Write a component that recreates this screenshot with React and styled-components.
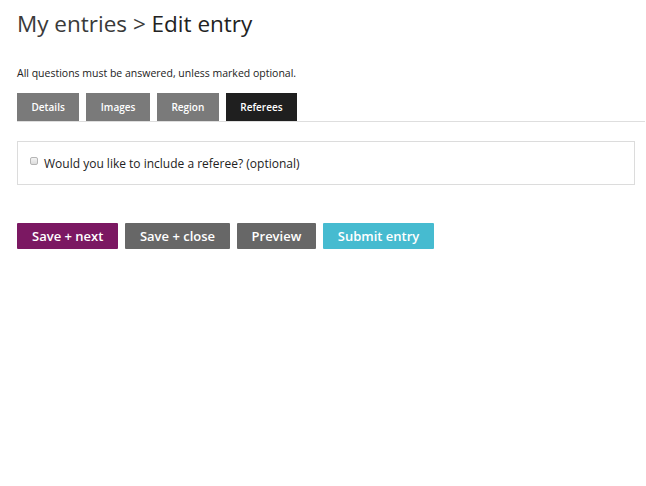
import React from 'react';
import styled, { createGlobalStyle } from 'styled-components';

const Global = createGlobalStyle`
body {
  margin: 0;
  background: #fff;
  font-family: "Open Sans", "Liberation Sans", sans-serif;
  color: #222;
}
`

const Page = styled.div`
padding: 8px 1px 0 17px;
`

const Title = styled.h1`
margin: 0;
font-size: 22.5px;
font-weight: 400;
line-height: 32px;
color: #222;
span {
    color: #3a3a3a;
}
`

const Note = styled.p`
margin: 26px 0 13px;
font-size: 10.5px;
line-height: 14px;
color: #222;
`

const Tabs = styled.div`
display: flex;
gap: 7px;
border-bottom: 1px solid #dedede;
`

const Tab = styled.div`
height: 28px;
padding: 0 14.5px;
display: flex;
align-items: center;
background: ${p => (p.active ? '#1f1f1f' : '#7a7a7a')};
color: #fff;
font-size: 10px;
font-weight: 600;
`

const Panel = styled.div`
margin-top: 19px;
width: 618px;
height: 44px;
border: 1px solid #dcdcdc;
display: flex;
align-items: center;
padding-left: 12px;
box-sizing: border-box;
font-size: 12px;
color: #222;
`

const Check = styled.span`
width: 8px;
height: 8px;
box-sizing: border-box;
border: 1px solid #b5b5b5;
border-radius: 2px;
background: linear-gradient(#f4f4f4, #dcdcdc);
margin-right: 6px;
transform: translateY(-2px);
`

const Actions = styled.div`
margin-top: 38px;
display: flex;
gap: 6.5px;
`

const Button = styled.button`
height: 26px;
padding: 0 15px;
border: none;
border-radius: 1px;
background: ${p => p.bg};
color: #fff;
font-family: inherit;
font-size: 13px;
font-weight: 600;
`

const tabs = [
    { label: 'Details' },
    { label: 'Images' },
    { label: 'Region' },
    { label: 'Referees', active: true },
]

export default function App() {
    return (
        <Page>
            <Global />
            <Title><span>My entries &gt;</span> Edit entry</Title>
            <Note>All questions must be answered, unless marked optional.</Note>
            <Tabs>
                {tabs.map(t => (
                    <Tab key={t.label} active={t.active}>{t.label}</Tab>
                ))}
            </Tabs>
            <Panel>
                <Check />
                Would you like to include a referee? (optional)
            </Panel>
            <Actions>
                <Button bg='#7b1862'>Save + next</Button>
                <Button bg='#676767'>Save + close</Button>
                <Button bg='#676767'>Preview</Button>
                <Button bg='#46bbd0'>Submit entry</Button>
            </Actions>
        </Page>
    );
}
